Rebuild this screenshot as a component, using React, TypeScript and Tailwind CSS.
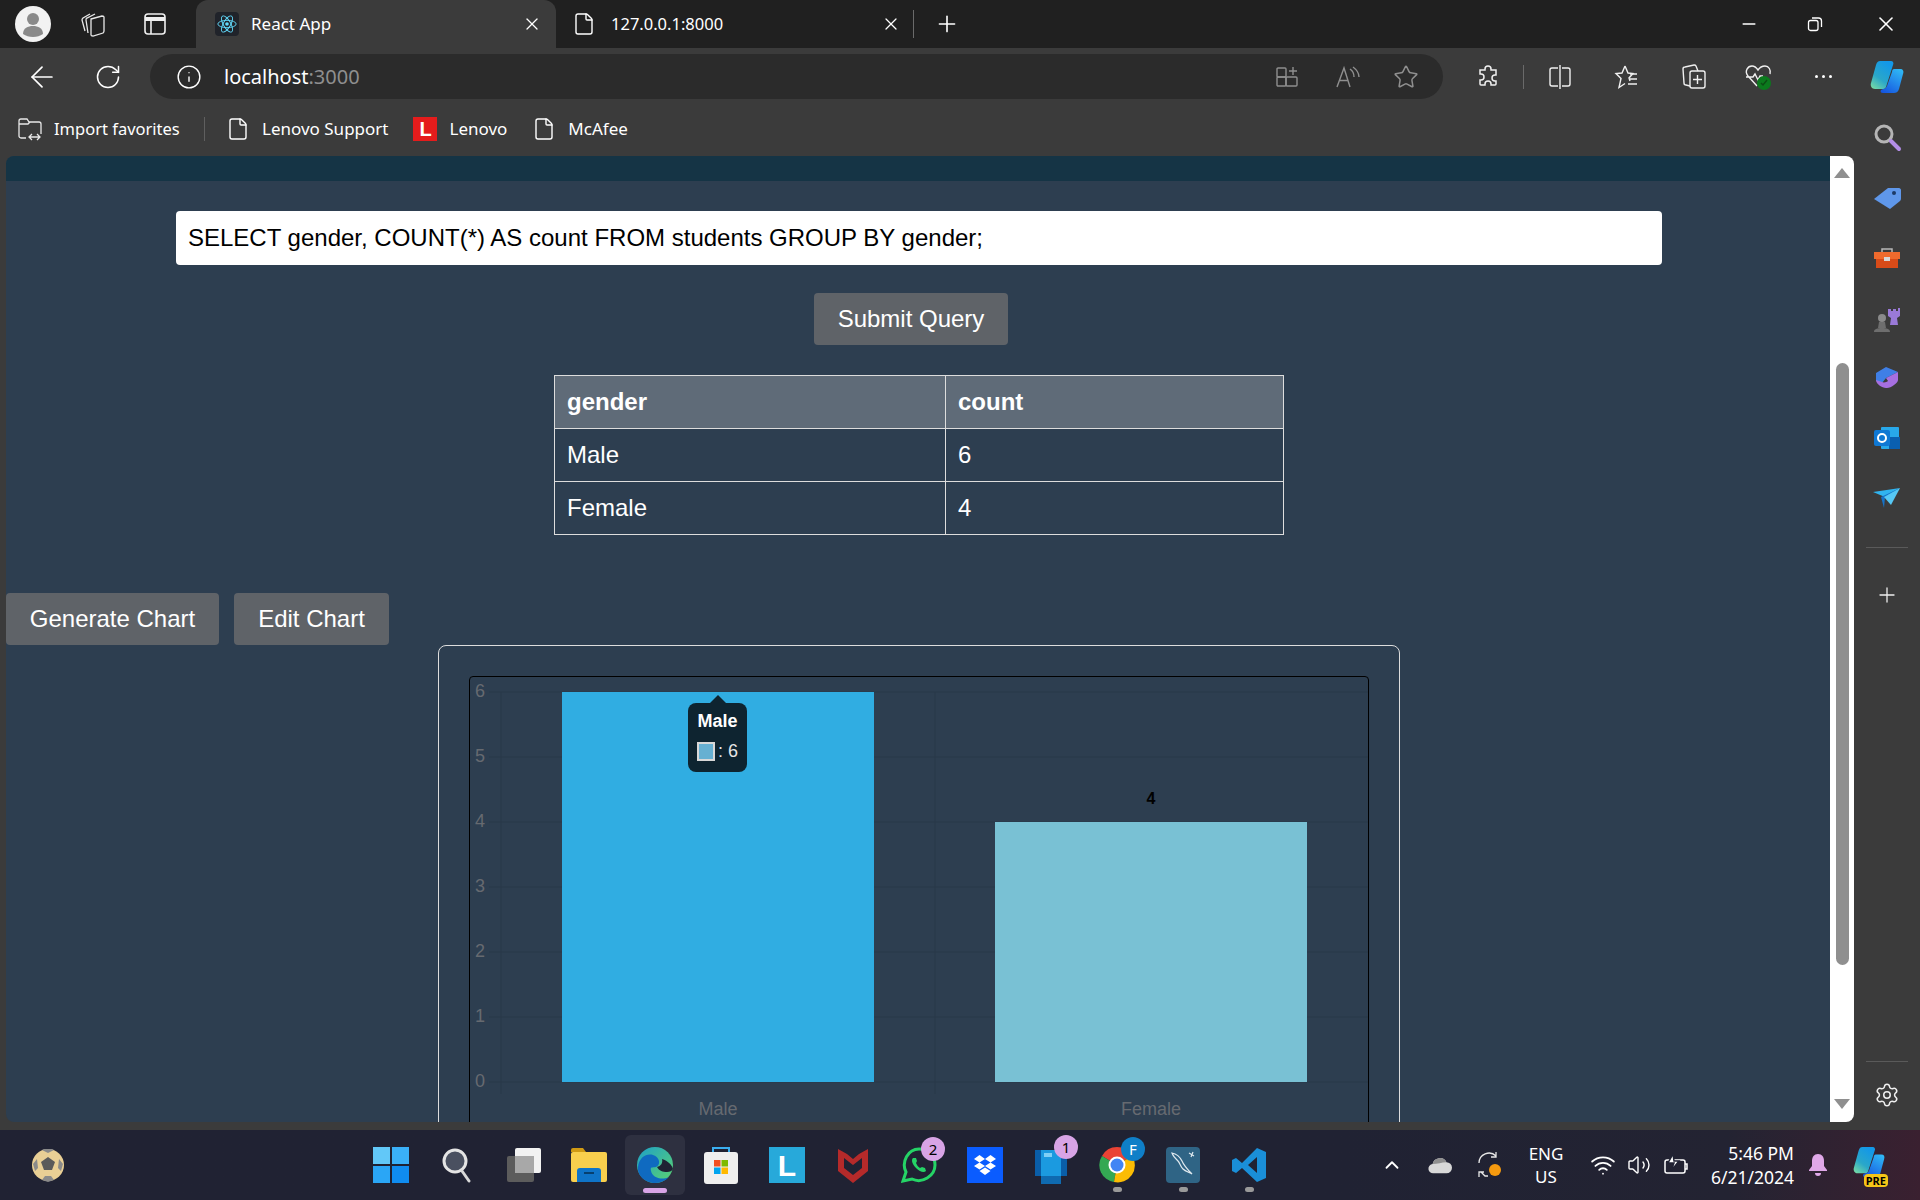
import {
  ArrowLeft,
  ChevronUp,
  File,
  Info,
  Minus,
  Plus,
  RotateCw,
  Settings,
  Star,
  Volume2,
  Wifi,
  X,
} from "lucide-react";
import type { ReactNode } from "react";

const uiFont = "font-['Noto_Sans',sans-serif]";

function ReactLogo() {
  return (
    <div className="flex h-[24px] w-[24px] items-center justify-center rounded-sm bg-[#20232a]">
      <svg width="22" height="22" viewBox="-12 -12 24 24" fill="none" stroke="#61dafb" strokeWidth="1">
        <circle r="2" fill="#61dafb" stroke="none" />
        <ellipse rx="10" ry="4" />
        <ellipse rx="10" ry="4" transform="rotate(60)" />
        <ellipse rx="10" ry="4" transform="rotate(120)" />
      </svg>
    </div>
  );
}

function Avatar() {
  return (
    <svg width="36" height="36" viewBox="0 0 36 36">
      <circle cx="18" cy="18" r="18" fill="#f2f2f2" />
      <circle cx="18" cy="13" r="6" fill="#8a8a8a" />
      <path d="M8 28c0-6 5-8 10-8s10 2 10 8c-3 2-6 3-10 3s-7-1-10-3z" fill="#8a8a8a" />
    </svg>
  );
}

function TabsIcon() {
  return (
    <svg width="26" height="26" viewBox="0 0 26 26" fill="none" stroke="#e8e8e8" strokeWidth="1.3">
      <path d="M5 20L2 9c0-1 0-1 1-2l7-4" />
      <path d="M8 22L6 9c0-1 0-2 1-2l8-4" />
      <path d="M11 8l11-3c1 0 2 0 2 1v14c0 1 0 1-1 2l-10 3c-1 0-2 0-2-1z" />
    </svg>
  );
}

function PanelIcon() {
  return (
    <svg width="22" height="22" viewBox="0 0 22 22" fill="none" stroke="#efefef" strokeWidth="1.6">
      <rect x="1" y="1" width="20" height="20" rx="3" />
      <path d="M1 6h20" strokeWidth="4" />
      <path d="M7 6v15" />
    </svg>
  );
}

function RestoreIcon() {
  return (
    <svg width="16" height="16" viewBox="0 0 16 16" fill="none" stroke="#fff" strokeWidth="1.3">
      <rect x="1.5" y="4.5" width="9.5" height="10" rx="2" />
      <path d="M5 2h6.5a3 3 0 0 1 3 3v6" />
    </svg>
  );
}

function ImportIcon() {
  return (
    <svg width="26" height="26" viewBox="0 0 26 26" fill="none" stroke="#e8e8e8" strokeWidth="1.3">
      <path d="M9 22H4a2 2 0 0 1-2-2V5a2 2 0 0 1 2-2h6l2 3h10a2 2 0 0 1 2 2v10" />
      <path d="M2 8h9l2-2" />
      <path d="M12 21h11M15 18l-3 3 3 3M20 18l3 3-3 3" />
    </svg>
  );
}

function GridPlusIcon() {
  return (
    <svg width="24" height="24" viewBox="0 0 24 24" fill="none" stroke="#8f8f8f" strokeWidth="1.4">
      <rect x="2" y="3" width="9" height="9" rx="1" />
      <rect x="2" y="12" width="9" height="9" rx="1" />
      <rect x="11" y="12" width="11" height="9" rx="1" />
      <path d="M18 2v8M14 6h8" />
    </svg>
  );
}

function ReadIcon() {
  return (
    <svg width="26" height="24" viewBox="0 0 26 24" fill="none" stroke="#8f8f8f" strokeWidth="1.4">
      <path d="M2 22L9 3l6 19M4.500 15.500h9" />
      <path d="M15 4c3 2 4 5 4 8M18 2c4 3 6 6 6 10" />
    </svg>
  );
}

function PuzzleIcon() {
  return (
    <svg width="24" height="26" viewBox="0 0 24 26" fill="none" stroke="#f0f0f0" strokeWidth="1.5">
      <path d="M9 5a3 3 0 0 1 6 0v1h5v5h-1a3 3 0 0 0 0 6h1v3a1 1 0 0 1-1 1h-4v-1a3 3 0 0 0-6 0v1H5a1 1 0 0 1-1-1v-4h1a3 3 0 0 0 0-6H4V6h5z" />
    </svg>
  );
}

function SplitIcon() {
  return (
    <svg width="24" height="26" viewBox="0 0 24 26" fill="none" stroke="#f0f0f0" strokeWidth="1.4">
      <path d="M10 4H4a2 2 0 0 0-2 2v14a2 2 0 0 0 2 2h6M14 4h6a2 2 0 0 1 2 2v14a2 2 0 0 1-2 2h-6M12 1v24" />
    </svg>
  );
}

function FavListIcon() {
  return (
    <svg width="26" height="26" viewBox="0 0 26 26" fill="none" stroke="#f0f0f0" strokeWidth="1.4">
      <path d="M12 2l3 7 5 .5-4 4.500 1 3M12 2L9 9l-6 .5 5 5-2 9 6-4" />
      <path d="M17 10h7M17 15h7M15 20h9" />
    </svg>
  );
}

function CollectionIcon() {
  return (
    <svg width="26" height="28" viewBox="0 0 26 28" fill="none" stroke="#f0f0f0" strokeWidth="1.4">
      <path d="M9 23L5 22a2 2 0 0 1-2-2L2 6a2 2 0 0 1 2-2l9-2a2 2 0 0 1 2 1l2 5" />
      <rect x="9" y="8" width="15" height="17" rx="2" />
      <path d="M16.500 12v9M12 16.500h9" />
    </svg>
  );
}

function HeartIcon() {
  return (
    <svg width="30" height="30" viewBox="0 0 30 30" fill="none">
      <path
        d="M13 24L4 14c-4-5 0-10 4-10 3 0 4 1 6 4 2-3 4-4 7-4 4 0 6 4 5 8M2 15h7l2-3 3 6 2-4h3"
        stroke="#f0f0f0"
        strokeWidth="1.4"
      />
      <circle cx="20" cy="21" r="7" fill="#0b7a1d" />
      <path d="M17 21l2 2 4-5" stroke="#0c4d14" strokeWidth="1.4" />
    </svg>
  );
}

function CopilotIcon({ size = 36 }: { size?: number }) {
  return (
    <svg width={size} height={size} viewBox="0 0 36 36">
      <defs>
        <linearGradient id="copA" x1="0" y1="1" x2="0.6" y2="0">
          <stop offset="0" stopColor="#7fe0a0" />
          <stop offset="0.45" stopColor="#2aa7c9" />
          <stop offset="1" stopColor="#1398e8" />
        </linearGradient>
        <linearGradient id="copB" x1="0.8" y1="0" x2="0.2" y2="1">
          <stop offset="0" stopColor="#2fb7f5" />
          <stop offset="1" stopColor="#1657e0" />
        </linearGradient>
      </defs>
      <path d="M11 2h11c2 0 3 2 2 4l-7 22c-1 2-2 2-4 2H6c-3 0-5-3-4-6l5-18c1-3 2-4 4-4z" fill="url(#copA)" />
      <path d="M25 10h6c3 0 4 2 3 5l-4 15c-1 3-3 4-5 4H14c-2 0-3-1-2-3l2-1c2 0 3-1 4-3l5-14c0-2 1-3 2-3z" fill="url(#copB)" />
    </svg>
  );
}

function SideIcon({ children, className = "" }: { children: ReactNode; className?: string }) {
  return <div className={`flex h-[60px] w-full items-center justify-center ${className}`}>{children}</div>;
}

function SidePanel() {
  return (
    <div className="flex h-full w-[66px] flex-col items-center">
      <div className="mt-[12px] flex h-[30px] items-center justify-center">
        <svg width="30" height="30" viewBox="0 0 30 30" fill="none">
          <circle cx="12" cy="12" r="8" stroke="#b5b5b5" strokeWidth="3" />
          <path d="M19 19l8 8" stroke="#b48ee8" strokeWidth="4" strokeLinecap="round" />
        </svg>
      </div>
      <SideIcon className="mt-[16px]">
        <svg width="28" height="24" viewBox="0 0 28 24">
          <path d="M1 13L15 2h11c1 0 2 1 2 2v8c0 1 0 2-1 3L17 23z" fill="#5f97ea" />
          <circle cx="21" cy="7" r="2" fill="#1d3a66" />
        </svg>
      </SideIcon>
      <SideIcon>
        <svg width="28" height="24" viewBox="0 0 28 24" fill="none">
          <path d="M9 6V3h10v3" stroke="#b8b8b8" strokeWidth="1.5" />
          <rect x="1" y="6" width="26" height="7" fill="#ef6a2d" />
          <rect x="3" y="13" width="22" height="9" fill="#d84b18" />
          <rect x="11" y="11" width="6" height="4" fill="#d8d8d8" />
        </svg>
      </SideIcon>
      <SideIcon className="pt-[3px]">
        <svg width="28" height="28" viewBox="0 0 28 28">
          <circle cx="9" cy="12" r="4" fill="#8a8a8a" />
          <path d="M6 16h6l1 6H5zM1 26c0-3 3-4 8-4s8 1 8 4z" fill="#6e6e6e" />
          <path d="M15 3h3v2h2V3h3v2h2V2h2v8l-3 2 1 7h-8l1-7-3-2z" fill="#9a7ad8" />
        </svg>
      </SideIcon>
      <SideIcon>
        <svg width="26" height="26" viewBox="0 0 26 26">
          <path d="M2 8l10-6 12 5-6 3-6 3-4 5-6-2z" fill="#3f7fe6" />
          <path d="M12 13l12-6v8c0 3-8 9-12 8-4 0-10-4-10-8l6 2c2 1 5 0 6-1z" fill="#a66fe0" />
        </svg>
      </SideIcon>
      <SideIcon>
        <svg width="28" height="26" viewBox="0 0 28 26">
          <rect x="8" y="2" width="18" height="22" rx="1" fill="#28a8ea" />
          <rect x="16" y="12" width="11" height="12" fill="#0a5fb0" />
          <rect x="1" y="5" width="16" height="16" rx="2" fill="#0f78d4" />
          <circle cx="9" cy="13" r="4" fill="none" stroke="#fff" strokeWidth="2" />
        </svg>
      </SideIcon>
      <SideIcon>
        <svg width="28" height="22" viewBox="0 0 28 22">
          <path d="M0 5l27-4-15 9z" fill="#30b4ef" />
          <path d="M27 1L12 10l-1 11-3-11z" fill="#1673c8" />
          <path d="M27 1l-9 17-7-8z" fill="#56c8f5" />
        </svg>
      </SideIcon>
      <div className="mt-[19px] h-px w-[42px] bg-[#5a5a5a]" />
      <div className="mt-[34px] flex h-[26px] items-center justify-center">
        <Plus size={24} color="#eeeeee" strokeWidth={1.3} />
      </div>
      <div className="mt-auto h-px w-[42px] bg-[#5a5a5a]" />
      <div className="mt-[20px] mb-[22px] flex h-[26px] items-center justify-center">
        <Settings size={26} color="#eeeeee" strokeWidth={1.4} />
      </div>
    </div>
  );
}

function Scrollbar() {
  return (
    <div className="flex w-[24px] flex-col items-center rounded-tr-lg rounded-br-lg bg-white pt-[12px] pb-[13px]">
      <div className="h-0 w-0 border-r-[8px] border-b-[10px] border-l-[8px] border-r-transparent border-b-[#8f8f8f] border-l-transparent" />
      <div className="mt-[185px] h-[602px] w-[13px] rounded-full bg-[#8f8f8f]" />
      <div className="mt-auto h-0 w-0 border-t-[10px] border-r-[8px] border-l-[8px] border-t-[#8f8f8f] border-r-transparent border-l-transparent" />
    </div>
  );
}

function BarChart() {
  const grid = [692, 757, 822, 887, 952, 1017, 1082];
  return (
    <svg width="898" height="480" viewBox="470 677 898 480" className="block">
      {grid.map((y, i) => (
        <g key={y}>
          <line x1="489" x2="1368" y1={y} y2={y} stroke="#283848" strokeWidth="1" />
          <text x="475" y={y + 5} fontSize="18" fill="#666a70" fontFamily="Liberation Sans">
            {6 - i}
          </text>
        </g>
      ))}
      <line x1="501" x2="501" y1="692" y2="1094" stroke="#283848" />
      <line x1="935" x2="935" y1="692" y2="1094" stroke="#283848" />
      <rect x="562" y="692" width="312" height="390" fill="#30ade2" />
      <rect x="995" y="822" width="312" height="260" fill="#79c1d4" />
      <text x="1151" y="804" fontSize="16" fontWeight="700" textAnchor="middle" fontFamily="Liberation Sans" fill="#000">
        4
      </text>
      <text x="718" y="1115" fontSize="18" textAnchor="middle" fontFamily="Liberation Sans" fill="#666a70">
        Male
      </text>
      <text x="1151" y="1115" fontSize="18" textAnchor="middle" fontFamily="Liberation Sans" fill="#666a70">
        Female
      </text>
    </svg>
  );
}

function TaskIcon({ children, dot }: { children: ReactNode; dot?: boolean }) {
  return (
    <div className="relative flex h-[70px] w-[66px] items-center justify-center">
      {children}
      {dot && <div className="absolute bottom-[8px] h-[5px] w-[9px] rounded-full bg-[#9a9a9a]" />}
    </div>
  );
}

function Badge({ children, className }: { children: ReactNode; className: string }) {
  return (
    <div className={`absolute flex h-[24px] w-[24px] items-center justify-center rounded-full text-[15px] ${className}`}>
      {children}
    </div>
  );
}

function Taskbar() {
  return (
    <div
      className={`flex h-[70px] items-center bg-gradient-to-r from-[#202233] from-70% via-[#232332] via-90% to-[#3a2030] text-white ${uiFont}`}
    >
      <div className="ml-[32px] w-[326px]">
        <svg width="32" height="34" viewBox="0 0 32 34">
          <circle cx="16" cy="17" r="16" fill="#e9cf95" />
          <path d="M16 9l7 5-3 8h-8l-3-8z" fill="#5a5a5a" />
          <path d="M10 2l6 3 6-3-2-1h-8zM1 16l4-5 1 9-3 3zM31 16l-4-5-1 9 3 3zM10 32l3-4h6l3 4-6 2z" fill="#8a8a8a" />
        </svg>
      </div>
      <TaskIcon>
        <svg width="36" height="36" viewBox="0 0 36 36">
          <rect x="0" y="0" width="17" height="17" fill="#62c8f8" />
          <rect x="19" y="0" width="17" height="17" fill="#3ab0f8" />
          <rect x="0" y="19" width="17" height="17" fill="#2aa6f6" />
          <rect x="19" y="19" width="17" height="17" fill="#0f8cf0" />
        </svg>
      </TaskIcon>
      <TaskIcon>
        <svg width="34" height="36" viewBox="0 0 34 36" fill="none">
          <circle cx="15" cy="14" r="11" fill="#4a5060" stroke="#e4e4e4" strokeWidth="3" />
          <path d="M22 24l7 10" stroke="#d8d8d8" strokeWidth="3" strokeLinecap="round" />
        </svg>
      </TaskIcon>
      <TaskIcon>
        <svg width="36" height="36" viewBox="0 0 36 36">
          <rect x="2" y="9" width="27" height="26" rx="2" fill="#5c5c5c" />
          <rect x="10" y="1" width="26" height="25" rx="2" fill="#f2f2f2" />
          <rect x="10" y="9" width="19" height="17" fill="#a8a8a8" />
        </svg>
      </TaskIcon>
      <TaskIcon>
        <svg width="36" height="34" viewBox="0 0 36 34">
          <path d="M0 2a2 2 0 0 1 2-2h10l3 4h-15z" fill="#d09a14" />
          <rect x="0" y="4" width="36" height="30" rx="2" fill="#f9cf4d" />
          <path d="M6 34V23a3 3 0 0 1 3-3h18a3 3 0 0 1 3 3v11z" fill="#0f74c8" />
          <rect x="13" y="24" width="10" height="2" fill="#07406f" />
        </svg>
      </TaskIcon>
      <div className="relative mx-[3px] flex h-[60px] w-[60px] items-center justify-center rounded-md bg-[#2e3040]">
        <svg width="36" height="36" viewBox="0 0 36 36">
          <defs>
            <linearGradient id="edgeA" x1="0" y1="0" x2="1" y2="1">
              <stop offset="0" stopColor="#1ea0c8" />
              <stop offset="1" stopColor="#5cd46e" />
            </linearGradient>
          </defs>
          <circle cx="18" cy="18" r="18" fill="url(#edgeA)" />
          <path d="M1 20C2 10 10 6 16 8c7 2 8 10 3 12-4 1-6-1-5 4 1 6 10 10 18 6-4 4-9 6-14 6C9 36 0 29 1 20z" fill="#0f6ac0" />
          <path d="M20 20c4-1 6-4 5-8 6 2 10 6 11 10-1 2-3 3-6 3-4 0-8-1-10-5z" fill="#1f2233" />
        </svg>
        <div className="absolute bottom-[2px] h-[5px] w-[24px] rounded-full bg-[#d8a4e6]" />
      </div>
      <TaskIcon>
        <svg width="36" height="38" viewBox="0 0 36 38">
          <path d="M10 6V2h16v4" fill="none" stroke="#3aaef0" strokeWidth="2" />
          <rect x="1" y="6" width="34" height="32" rx="3" fill="#efefef" />
          <rect x="11" y="14" width="6.500" height="6.500" fill="#f25022" />
          <rect x="18.500" y="14" width="6.500" height="6.500" fill="#7fba00" />
          <rect x="11" y="21.500" width="6.500" height="6.500" fill="#00a4ef" />
          <rect x="18.500" y="21.500" width="6.500" height="6.500" fill="#ffb900" />
        </svg>
      </TaskIcon>
      <TaskIcon>
        <div className="flex h-[36px] w-[36px] items-center justify-center bg-[#27a9da] font-['Liberation_Sans',sans-serif] text-[30px] font-bold text-white">
          L
        </div>
      </TaskIcon>
      <TaskIcon>
        <svg width="32" height="36" viewBox="0 0 32 36">
          <path d="M1 2l9 5 6 5 6-5 9-5v22l-15 12L1 24z" fill="#b52a2a" />
          <path d="M7 11l9 7 9-7v10l-9 7-9-7z" fill="#202233" />
        </svg>
      </TaskIcon>
      <TaskIcon>
        <svg width="36" height="36" viewBox="0 0 36 36" fill="none">
          <path d="M2 34l3-9C0 15 7 2 18 2c10 0 16 8 16 16 0 11-13 19-23 14z" stroke="#25d366" strokeWidth="3" />
          <path d="M12 11c-2 2-1 6 3 10s8 5 10 3l-1-3-3-1-2 1c-2-1-3-3-4-5l1-2-1-3z" fill="#25d366" />
        </svg>
        <Badge className="top-[7px] right-[7px] bg-[#d8a4e6] text-black">2</Badge>
      </TaskIcon>
      <TaskIcon>
        <div className="flex h-[36px] w-[36px] items-center justify-center bg-[#0a5cff]">
          <svg width="24" height="24" viewBox="0 0 24 24" fill="#fff">
            <path d="M6.500 2L1 6l5.500 3.500L12 6zM17.500 2L12 6l5.500 3.500L23 6zM1 13l5.500 3.500L12 13 6.500 9.500zM23 13l-5.500 3.500L12 13l5.500-3.500zM6.500 18l5.500 4 5.500-4-5.500-3.500z" />
          </svg>
        </div>
      </TaskIcon>
      <TaskIcon>
        <svg width="36" height="38" viewBox="0 0 36 38">
          <rect x="2" y="4" width="32" height="26" fill="#0a5ea8" />
          <rect x="8" y="4" width="20" height="34" fill="#1b9ae0" />
          <rect x="8" y="30" width="20" height="8" fill="#0f6ab0" />
          <rect x="11" y="7" width="8" height="4" fill="#7fd0f6" />
        </svg>
        <Badge className="top-[5px] right-[6px] bg-[#d8a4e6] text-black">1</Badge>
      </TaskIcon>
      <TaskIcon dot>
        <svg width="36" height="36" viewBox="0 0 36 36">
          <path d="M18 18L3 9a17 17 0 0 1 30 0z" fill="#ea4335" />
          <path d="M18 18L3 9a17 17 0 0 0 12 26z" fill="#34a853" />
          <path d="M18 18l15-9a17 17 0 0 1-18 26z" fill="#fbbc04" />
          <circle cx="18" cy="18" r="8.500" fill="#fff" />
          <circle cx="18" cy="18" r="6.500" fill="#4285f4" />
        </svg>
        <Badge className="top-[7px] right-[5px] bg-[#0f7fc8] text-white">F</Badge>
      </TaskIcon>
      <TaskIcon dot>
        <div className="flex h-[36px] w-[34px] items-center justify-center rounded-sm bg-[#2f6485]">
          <svg width="28" height="30" viewBox="0 0 28 30" fill="none" stroke="#dfe9ef" strokeWidth="1.200">
            <path d="M3 3c5 1 8 4 10 8 2 5 5 8 10 13-4-2-7-3-9-5-3-3-3-6-5-8C6 8 4 6 3 3z" />
            <path d="M24 2l-2 5M20 3l5 3" />
          </svg>
        </div>
      </TaskIcon>
      <TaskIcon dot>
        <svg width="36" height="36" viewBox="0 0 36 36">
          <path d="M26 1l9 4v26l-9 4-15-14-6 5-4-2V13l4-2 6 5zM26 10l-9 8 9 8z" fill="#1a8fd8" fillRule="evenodd" />
        </svg>
      </TaskIcon>
      <div className="ml-[94px] flex w-[32px] justify-center">
        <ChevronUp size={22} color="#ffffff" strokeWidth={2} />
      </div>
      <div className="ml-[20px] flex w-[24px] justify-center">
        <svg width="26" height="20" viewBox="0 0 26 20">
          <path d="M6 19a5 5 0 0 1-1-10 8 8 0 0 1 15-2 6 6 0 0 1 0 12z" fill="#d8d8d8" />
          <path d="M5 9a8 8 0 0 1 15-2c-5 0-10 2-15 2z" fill="#8f8f8f" />
        </svg>
      </div>
      <div className="ml-[19px] flex w-[36px] justify-center">
        <svg width="28" height="28" viewBox="0 0 28 28" fill="none">
          <path d="M4 12a10 10 0 0 1 17-7M21 1v5h-5M4 26v-5h5M6 21l4 4h3" stroke="#e8e8e8" strokeWidth="1.300" />
          <circle cx="20" cy="19" r="6" fill="#f59a0f" />
        </svg>
      </div>
      <div className="ml-[17px] flex w-[44px] flex-col items-center text-[17px] leading-[23px]">
        <span>ENG</span>
        <span>US</span>
      </div>
      <div className="ml-[22px] flex items-center gap-[11px]">
        <Wifi size={26} color="#ffffff" strokeWidth={1.7} />
        <Volume2 size={24} color="#ffffff" strokeWidth={1.4} />
        <svg width="28" height="24" viewBox="0 0 28 24" fill="none" stroke="#fff" strokeWidth="1.500">
          <rect x="3" y="7" width="20" height="13" rx="2" />
          <path d="M23 11h2v5h-2" />
          <path d="M11 1L6 10h6l-3 8 8-10h-5z" fill="#fff" stroke="#202233" />
        </svg>
      </div>
      <div className="ml-[19px] flex w-[85px] flex-col items-end text-[17.500px] leading-[24px] whitespace-nowrap">
        <span>5:46 PM</span>
        <span>6/21/2024</span>
      </div>
      <div className="ml-[12px] flex w-[24px] justify-center">
        <svg width="20" height="24" viewBox="0 0 20 24">
          <path d="M10 1c4 0 6 3 6 7v5l3 4v1H1v-1l3-4V8c0-4 2-7 6-7z" fill="#e0a8e8" />
          <path d="M7 20h6a3 3 0 0 1-6 0z" fill="#e0a8e8" />
        </svg>
      </div>
      <div className="relative ml-[22px] h-[40px] w-[36px]">
        <CopilotIcon size={34} />
        <div className="absolute right-[0px] bottom-[-2px] rounded-sm bg-[#f5c518] px-[2px] text-[11px] leading-[13px] font-bold text-black">
          PRE
        </div>
      </div>
    </div>
  );
}

export default function App() {
  return (
    <div className="flex h-[1200px] w-[1920px] flex-col overflow-hidden bg-[#3b3b3b]">
      {/* tabs */}
      <div className={`flex h-[48px] items-center bg-[#202020] text-white ${uiFont}`}>
        <div className="ml-[15px] w-[65px]">
          <Avatar />
        </div>
        <div className="w-[64px]">
          <TabsIcon />
        </div>
        <div className="w-[52px]">
          <PanelIcon />
        </div>
        <div className="flex h-[48px] w-[360px] items-center rounded-t-xl bg-[#3b3b3b] pl-[19px] text-[17px]">
          <ReactLogo />
          <span className="ml-[12px]">React App</span>
          <X className="mr-[14px] ml-auto" size={20} strokeWidth={1.5} />
        </div>
        <div className="flex h-[48px] w-[357px] items-center pl-[16px] text-[16.500px]">
          <File size={24} strokeWidth={1.4} />
          <span className="ml-[15px]">127.0.0.1:8000</span>
          <X className="mr-[12px] ml-auto" size={20} strokeWidth={1.5} />
        </div>
        <div className="h-[28px] w-px bg-[#6a6a6a]" />
        <Plus className="ml-[20px]" size={26} strokeWidth={1.5} />
        <Minus className="ml-auto" size={20} strokeWidth={1.7} />
        <div className="ml-[48px]">
          <RestoreIcon />
        </div>
        <X className="mr-[22px] ml-[51px]" size={24} strokeWidth={1.6} />
      </div>

      {/* address bar */}
      <div className={`flex h-[62px] items-center pb-[5px] text-white ${uiFont}`}>
        <ArrowLeft className="ml-[25px]" size={34} strokeWidth={1.2} />
        <RotateCw className="ml-[35px]" size={28} strokeWidth={1.3} />
        <div className="ml-[28px] flex h-[45px] w-[1293px] items-center rounded-full bg-[#2b2b2b]">
          <Info className="ml-[26px]" size={26} strokeWidth={1.3} />
          <span className="ml-[22px] text-[20px]">
            localhost<span className="text-[#8f8f8f]">:3000</span>
          </span>
          <div className="ml-auto flex items-center pr-[24px]">
            <GridPlusIcon />
            <div className="ml-[36px] mr-[32px]">
              <ReadIcon />
            </div>
            <Star size={26} color="#8f8f8f" strokeWidth={1.4} />
          </div>
        </div>
        <div className="ml-[33px]">
          <PuzzleIcon />
        </div>
        <div className="ml-[23px] h-[24px] w-px bg-[#6a6a6a]" />
        <div className="ml-[24px]">
          <SplitIcon />
        </div>
        <div className="ml-[41px]">
          <FavListIcon />
        </div>
        <div className="ml-[42px]">
          <CollectionIcon />
        </div>
        <div className="ml-[37px]">
          <HeartIcon />
        </div>
        <span className="ml-[41px] flex gap-[4px]">
          <span className="h-[3px] w-[3px] rounded-full bg-white" />
          <span className="h-[3px] w-[3px] rounded-full bg-white" />
          <span className="h-[3px] w-[3px] rounded-full bg-white" />
        </span>
        <div className="ml-[37px]">
          <CopilotIcon />
        </div>
      </div>

      {/* favorites, page, sidebar */}
      <div className="flex h-[1020px]">
        <div className="flex w-[1854px] flex-col">
          <div className={`flex h-[40px] items-center pb-[2px] text-[17px] text-white ${uiFont}`}>
            <div className="ml-[17px]">
              <ImportIcon />
            </div>
            <span className="ml-[11px] w-[150px] text-[16.500px]">Import favorites</span>
            <div className="h-[24px] w-px bg-[#5f5f5f]" />
            <File className="ml-[21px]" size={24} strokeWidth={1.4} />
            <span className="ml-[12px]">Lenovo Support</span>
            <div className="ml-[25px] flex h-[24px] w-[24px] items-center justify-center bg-[#e41c1c] font-['Liberation_Sans',sans-serif] text-[20px] font-bold">
              L
            </div>
            <span className="ml-[12px]">Lenovo</span>
            <File className="ml-[25px]" size={24} strokeWidth={1.4} />
            <span className="ml-[12px]">McAfee</span>
          </div>

          <div className="mt-[6px] flex h-[966px] pl-[6px]">
            <main className="h-full w-[1824px] overflow-hidden rounded-tl-lg rounded-bl-lg bg-[#2d3e50] font-['Liberation_Sans',sans-serif] text-white">
              <div className="h-[25px] bg-[#153445]" />
              <div className="mt-[30px] ml-[170px] flex h-[54px] w-[1486px] items-center rounded bg-white px-[12px] text-[24px] text-black">
                SELECT gender, COUNT(*) AS count FROM students GROUP BY gender;
              </div>
              <button className="mt-[28px] ml-[808px] block h-[52px] w-[194px] rounded bg-[#5f6368] text-[24px] text-white">
                Submit Query
              </button>
              <table className="mt-[30px] ml-[548px] w-[730px] border-collapse text-left text-[24px]">
                <thead>
                  <tr className="h-[53px] bg-[#5f6b78]">
                    <th className="w-[391px] border border-[#dddddd] px-[12px] font-bold">gender</th>
                    <th className="border border-[#dddddd] px-[12px] font-bold">count</th>
                  </tr>
                </thead>
                <tbody>
                  <tr className="h-[53px]">
                    <td className="border border-[#dddddd] px-[12px]">Male</td>
                    <td className="border border-[#dddddd] px-[12px]">6</td>
                  </tr>
                  <tr className="h-[53px]">
                    <td className="border border-[#dddddd] px-[12px]">Female</td>
                    <td className="border border-[#dddddd] px-[12px]">4</td>
                  </tr>
                </tbody>
              </table>
              <div className="mt-[58px] flex gap-[15px]">
                <button className="h-[52px] w-[213px] rounded bg-[#5f6368] text-[24px] text-white">Generate Chart</button>
                <button className="h-[52px] w-[155px] rounded bg-[#5f6368] text-[24px] text-white">Edit Chart</button>
              </div>
              <div className="ml-[432px] w-[962px] rounded-lg border border-[#dddddd] p-[30px]">
                <div className="relative w-[900px] rounded border border-black">
                  <BarChart />
                  <div className="absolute top-[26px] left-[218px] h-[69px] w-[59px] rounded-lg bg-[#0e2430] px-[9px] pt-[8px] text-[18px] leading-[20px]">
                    <div className="absolute top-[-8px] left-[22px] h-0 w-0 border-r-[8px] border-b-[8px] border-l-[8px] border-r-transparent border-b-[#0e2430] border-l-transparent" />
                    <div className="text-center font-bold">Male</div>
                    <div className="mt-[10px] flex items-center gap-[3px] text-[#e6e6e6]">
                      <span className="h-[19px] w-[19px] border-2 border-[#d8d8d8] bg-[#66b0d2]" />
                      <span className="whitespace-nowrap">: 6</span>
                    </div>
                  </div>
                </div>
              </div>
            </main>
            <Scrollbar />
          </div>
        </div>
        <SidePanel />
      </div>

      <Taskbar />
    </div>
  );
}
